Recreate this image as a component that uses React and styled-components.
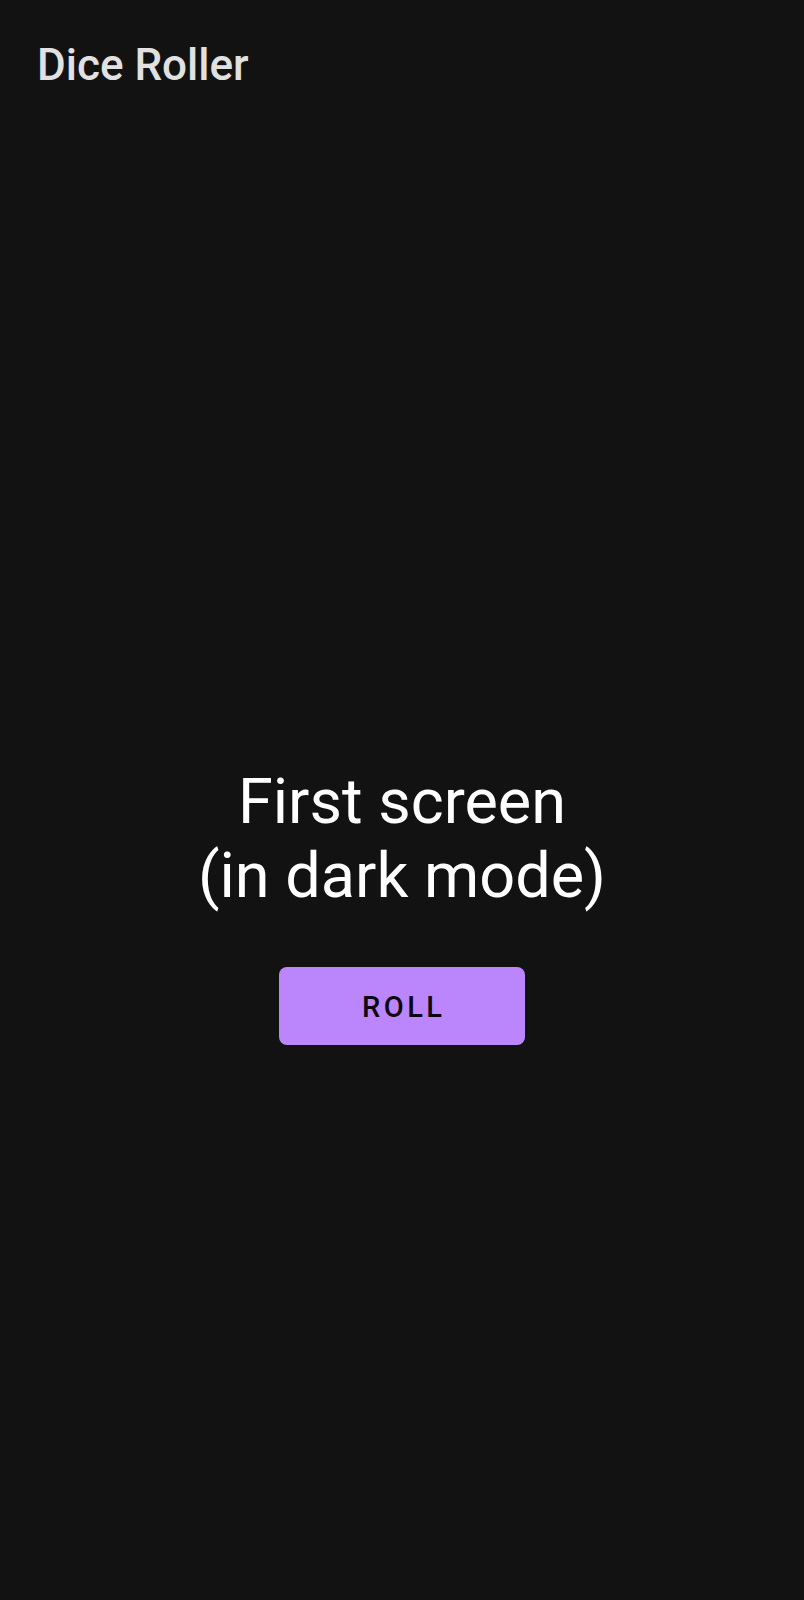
import React from 'react';
import styled, { createGlobalStyle } from 'styled-components';

const GlobalStyle = createGlobalStyle`
  html, body {
    margin: 0;
    padding: 0;
    background: #121212;
  }
  body {
    font-family: Roboto, 'Liberation Sans', sans-serif;
  }
`;

const Screen = styled.div`
  width: 100%;
  min-height: 1600px;
  background-color: #121212;
  display: flex;
  flex-direction: column;
`;

const TopBar = styled.header`
  padding: 39px 0 0 37px;
  height: 130px;
  box-sizing: border-box;
`;

const Title = styled.h1`
  margin: 0;
  font-size: 44px;
  line-height: 52px;
  font-weight: 500;
  color: #e1e1e1;
`;

const Content = styled.main`
  display: flex;
  flex-direction: column;
  align-items: center;
  padding-top: 635px;
`;

const Message = styled.p`
  margin: 0;
  font-size: 63px;
  line-height: 74px;
  font-weight: 400;
  color: #ffffff;
  text-align: center;
`;

const RollButton = styled.button`
  margin-top: 54px;
  width: 246px;
  height: 78px;
  border: none;
  border-radius: 8px;
  background-color: #bb86fc;
  color: #0c0612;
  font-family: Roboto, 'Liberation Sans', sans-serif;
  font-size: 29px;
  font-weight: 500;
  letter-spacing: 3.5px;
  padding: 2px 0 0 3.5px;
  cursor: pointer;
`;

const App = () => {
  return (
    <Screen>
      <GlobalStyle />
      <TopBar>
        <Title>Dice Roller</Title>
      </TopBar>
      <Content>
        <Message>
          First screen
          <br />
          (in dark mode)
        </Message>
        <RollButton type="button">ROLL</RollButton>
      </Content>
    </Screen>
  );
};

export default App;
